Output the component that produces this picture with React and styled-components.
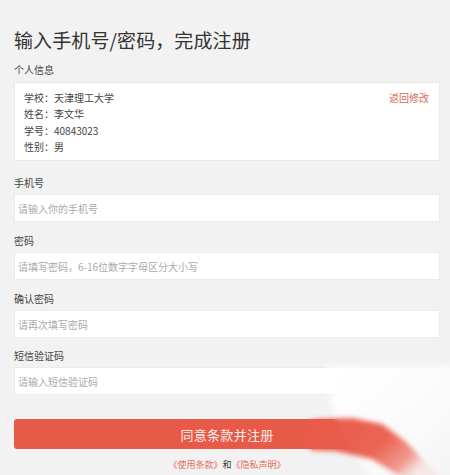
import React from "react";
import styled, { createGlobalStyle } from "styled-components";

const Global = createGlobalStyle`
  html, body { margin: 0; padding: 0; background: #f2f2f2; }
  body { font-family: "Noto Sans CJK SC", "Noto Sans", sans-serif; color: #333; }
`;

const Page = styled.div`
  position: relative;
  width: 450px;
  height: 475px;
  overflow: hidden;
  box-sizing: border-box;
  padding: 27px 10px 0 14px;
  background: #f2f2f2;
  display: flex;
  flex-direction: column;
`;

const Title = styled.h1`
  margin: 0;
  font-size: 19px;
  line-height: 25px;
  font-weight: 400;
  color: #333;
  letter-spacing: 0.1px;
`;

const Label = styled.div`
  font-size: 10px;
  line-height: 16px;
  color: #444;
  margin-top: ${(p) => p.$top}px;
`;

const Card = styled.div`
  margin-top: 4px;
  background: #fff;
  border: 1px solid #e9e9e9;
  box-sizing: border-box;
  height: 79px;
  padding: 7px 9px 0 9px;
  display: flex;
  justify-content: space-between;
  align-items: flex-start;
`;

const InfoList = styled.div`
  display: flex;
  flex-direction: column;
`;

const InfoLine = styled.div`
  font-size: 10px;
  line-height: 16.3px;
  color: #444;
`;

const EditLink = styled.a`
  font-size: 10px;
  line-height: 16px;
  color: #dc6a58;
  text-decoration: none;
  margin-right: 1px;
`;

const Input = styled.input`
  margin-top: 3px;
  height: 28px;
  box-sizing: border-box;
  width: 100%;
  border: 1px solid #ebebeb;
  background: #fff;
  padding: 0 3px;
  font-family: inherit;
  font-size: 10px;
  color: #333;
  outline: none;
  &::placeholder { color: #aaa; }
`;

const Button = styled.button`
  margin-top: 24px;
  height: 30px;
  width: 100%;
  border: none;
  border-radius: 3px;
  background: #e85a48;
  color: #fdeeee;
  font-family: inherit;
  font-size: 13px;
  letter-spacing: 0.3px;
  cursor: pointer;
`;

const Terms = styled.div`
  margin-top: 9px;
  text-align: center;
  font-size: 9px;
  line-height: 14px;
  color: #333;
`;

const TermLink = styled.a`
  color: #e26d5c;
  text-decoration: none;
`;

const Overlay = styled.svg`
  position: absolute;
  left: 0;
  top: 0;
  pointer-events: none;
`;

const fields = [
  { label: "手机号", ph: "请输入你的手机号", top: 14 },
  { label: "密码", ph: "请填写密码，6-16位数字字母区分大小写", top: 11 },
  { label: "确认密码", ph: "请再次填写密码", top: 11 },
  { label: "短信验证码", ph: "请输入短信验证码", top: 10 },
];

export default function App() {
  return (
    <>
      <Global />
      <Page>
        <Title>输入手机号/密码，完成注册</Title>
        <Label $top={10}>个人信息</Label>
        <Card>
          <InfoList>
            <InfoLine>学校：天津理工大学</InfoLine>
            <InfoLine>姓名：李文华</InfoLine>
            <InfoLine>学号：40843023</InfoLine>
            <InfoLine>性别：男</InfoLine>
          </InfoList>
          <EditLink href="#">返回修改</EditLink>
        </Card>
        {fields.map((f) => (
          <React.Fragment key={f.label}>
            <Label $top={f.top}>{f.label}</Label>
            <Input placeholder={f.ph} type={f.label.includes("密码") ? "password" : "text"} />
          </React.Fragment>
        ))}
        <Button>同意条款并注册</Button>
        <Terms>
          <TermLink href="#">《使用条款》</TermLink>和<TermLink href="#">《隐私声明》</TermLink>
        </Terms>
        <Overlay width="450" height="475" viewBox="0 0 450 475">
          <defs>
            <filter id="b1" x="-20%" y="-20%" width="140%" height="140%">
              <feGaussianBlur stdDeviation="3" />
            </filter>
            <filter id="b2" x="-30%" y="-30%" width="160%" height="160%">
              <feGaussianBlur stdDeviation="2.5" />
            </filter>
            <linearGradient id="bg" x1="0" y1="0" x2="1" y2="1">
              <stop offset="0" stopColor="#ffffff" />
              <stop offset="0.6" stopColor="#fbfbfb" />
              <stop offset="1" stopColor="#f3f3f3" />
            </linearGradient>
            <linearGradient id="rg" x1="0" y1="0" x2="1" y2="0.5">
              <stop offset="0" stopColor="#e85a48" stopOpacity="1" />
              <stop offset="0.6" stopColor="#ea5d4b" stopOpacity="0.95" />
              <stop offset="0.85" stopColor="#ed6f5f" stopOpacity="0.7" />
              <stop offset="1" stopColor="#f39a8e" stopOpacity="0.15" />
            </linearGradient>
          </defs>
          <polygon points="326,366 456,366 456,480 372,480 340,430 330,398" fill="url(#bg)" filter="url(#b1)" />
          <polygon points="310,420 352,418 382,424 406,442 442,480 406,480 372,459 335,451 310,450" fill="url(#rg)" filter="url(#b2)" />
        </Overlay>
      </Page>
    </>
  );
}
